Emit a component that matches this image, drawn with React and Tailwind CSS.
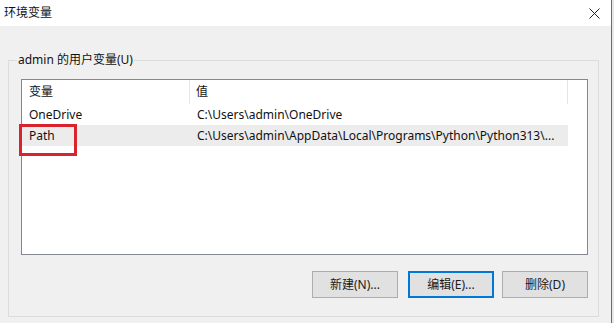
import React from "react";

const font = { fontFamily: '"Noto Sans", "Noto Sans CJK SC", sans-serif' };

function Btn({ children, focused, className = "" }) {
  return (
    <div
      className={
        "w-[86px] h-[27px] flex items-center justify-center bg-[#e1e1e1] text-[12px] text-[#1a1a1a] " +
        (focused ? "border-2 border-[#0078d7] " : "border border-[#adadad] ") +
        className
      }
    >
      {children}
    </div>
  );
}

export default function App() {
  return (
    <div className="w-[614px] h-[323px] flex bg-[#f0f0f0] overflow-hidden" style={font}>
      <div className="w-[611px] h-full flex flex-col">
        <div className="h-[26px] bg-white flex items-center justify-between pl-[4px] pr-[11px]">
          <span className="text-[12px] text-[#111] leading-none">环境变量</span>
          <svg width="11" height="11" viewBox="0 0 11 11">
            <path d="M0.5 0.5 L10.5 10.5 M10.5 0.5 L0.5 10.5" stroke="#222" strokeWidth="1" fill="none" />
          </svg>
        </div>
        <div className="pl-[8px] pt-[34px]">
          <div className="relative w-[591px] h-[257px] border border-[#dcdcdc] pl-[12px] pt-[18px] flex flex-col">
            <span className="absolute left-[8px] top-[-9px] px-[1px] bg-[#f0f0f0] text-[12px] leading-[16px] text-[#111]">
              admin 的用户变量(U)
            </span>
            <div className="w-[567px] h-[176px] border border-[#828790] bg-white flex flex-col text-[12px] text-[#111]">
              <div className="h-[24px] flex">
                <div className="w-[168px] border-r border-[#e5e5e5] pl-[7px] flex items-center">变量</div>
                <div className="w-[378px] border-r border-[#e5e5e5] pl-[6px] flex items-center">值</div>
              </div>
              <div className="h-[21px] w-[546px] flex items-center">
                <div className="w-[169px] pl-[7px]">OneDrive</div>
                <div className="pl-[6px]">C:\Users\admin\OneDrive</div>
              </div>
              <div className="relative h-[21px] w-[546px] flex items-center bg-[#ececec]">
                <div className="w-[169px] pl-[7px]">Path</div>
                <div className="pl-[6px] whitespace-nowrap">C:\Users\admin\AppData\Local\Programs\Python\Python313\...</div>
                <div className="absolute left-[-3px] top-[-1px] w-[58px] h-[32px] border-[3px] border-[#d9232d]" />
              </div>
            </div>
            <div className="mt-[16px] w-[567px] flex justify-end">
              <Btn>新建(N)...</Btn>
              <Btn focused className="ml-[10px]">编辑(E)...</Btn>
              <Btn className="ml-[8px]">删除(D)</Btn>
            </div>
          </div>
        </div>
      </div>
      <div className="w-[1px] h-full bg-[#6b6b6b]" />
      <div className="flex-1 h-full bg-[#e8e8e8]" />
    </div>
  );
}
